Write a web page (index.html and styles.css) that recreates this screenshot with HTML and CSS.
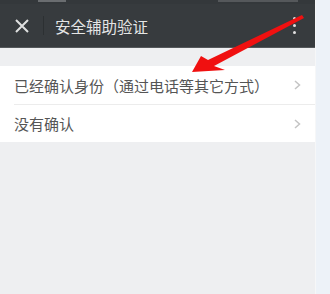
FILE: index.html
```
<!DOCTYPE html>
<html lang="zh-CN">
<head>
  <meta charset="UTF-8">
  <meta name="viewport" content="width=device-width, initial-scale=1.0">
  <title>安全辅助验证</title>
  <link rel="stylesheet" href="styles.css">
</head>
<body>
  <div class="phone">
    <div class="status">
      <span class="status-icon left"></span>
      <span class="status-icon right"></span>
    </div>
    <div class="topbar">
      <div class="close">
        <svg width="14" height="14" viewBox="0 0 14 14">
          <path d="M1 1 L13 13 M13 1 L1 13" stroke="#dfe0e0" stroke-width="2" fill="none"/>
        </svg>
      </div>
      <div class="sep"></div>
      <div class="title">安全辅助验证</div>
      <div class="more">
        <span></span><span></span><span></span>
      </div>
    </div>

    <div class="list">
      <div class="row">
        <span class="label">已经确认身份（通过电话等其它方式）</span>
        <svg class="chev" width="7" height="10" viewBox="0 0 7 10">
          <path d="M1 1 L5.5 5 L1 9" stroke="#c4c4c4" stroke-width="1.5" fill="none"/>
        </svg>
      </div>
      <div class="row">
        <span class="label">没有确认</span>
        <svg class="chev" width="7" height="10" viewBox="0 0 7 10">
          <path d="M1 1 L5.5 5 L1 9" stroke="#c4c4c4" stroke-width="1.5" fill="none"/>
        </svg>
      </div>
    </div>

    <!-- annotation arrow drawn over the screenshot -->
    <svg class="arrow" width="315" height="80" viewBox="0 0 315 80">
      <polygon points="192,72 201,56 208,60 302,15 304,18 214,66 225,70" fill="#f01010"/>
    </svg>
  </div>
  <div class="edge"></div>
</body>
</html>
```

FILE: styles.css
```
body {
  margin: 0;
  display: flex;
  height: 294px;
  overflow: hidden;
  background: #edf2f8;
  font-family: "Noto Sans CJK SC", "Noto Sans", sans-serif;
}
.phone {
  position: relative;
  width: 315px;
  height: 294px;
  background: #eeeff1;
  border-right: 1px solid #f6f7f8;
}
.status {
  height: 4px;
  background: #34383b;
  position: relative;
}
.status-icon {
  position: absolute;
  top: 0;
  height: 2px;
  background: #6a6d70;
}
.status-icon.left {
  left: 38px;
  width: 28px;
}
.status-icon.right {
  left: 218px;
  width: 80px;
  background: #55585b;
}
.topbar {
  height: 43px;
  background: #373b3e;
  border-bottom: 1px solid #54585b;
  display: flex;
  align-items: center;
}
.close {
  width: 43px;
  display: flex;
  justify-content: center;
  padding-left: 1px;
  box-sizing: border-box;
}
.sep {
  width: 1px;
  height: 19px;
  background: #2c3032;
}
.title {
  margin-left: 11px;
  color: #e4e5e5;
  font-size: 15.5px;
  flex: 1;
}
.more {
  width: 40px;
  display: flex;
  flex-direction: column;
  align-items: center;
  gap: 4px;
  margin-right: 1px;
}
.more span {
  width: 3px;
  height: 3px;
  border-radius: 50%;
  background: #e0e0e0;
}
.list {
  margin-top: 18px;
  background: #fff;
}
.row {
  height: 38px;
  box-sizing: border-box;
  margin-left: 14px;
  padding-right: 14px;
  display: flex;
  align-items: center;
  justify-content: space-between;
}
.row + .row {
  border-top: 1px solid #ececec;
}
.label {
  font-size: 15px;
  color: #555;
}
.arrow {
  position: absolute;
  left: 0;
  top: 0;
}
.edge {
  flex: 1;
  background: #edf2f8;
}
```
